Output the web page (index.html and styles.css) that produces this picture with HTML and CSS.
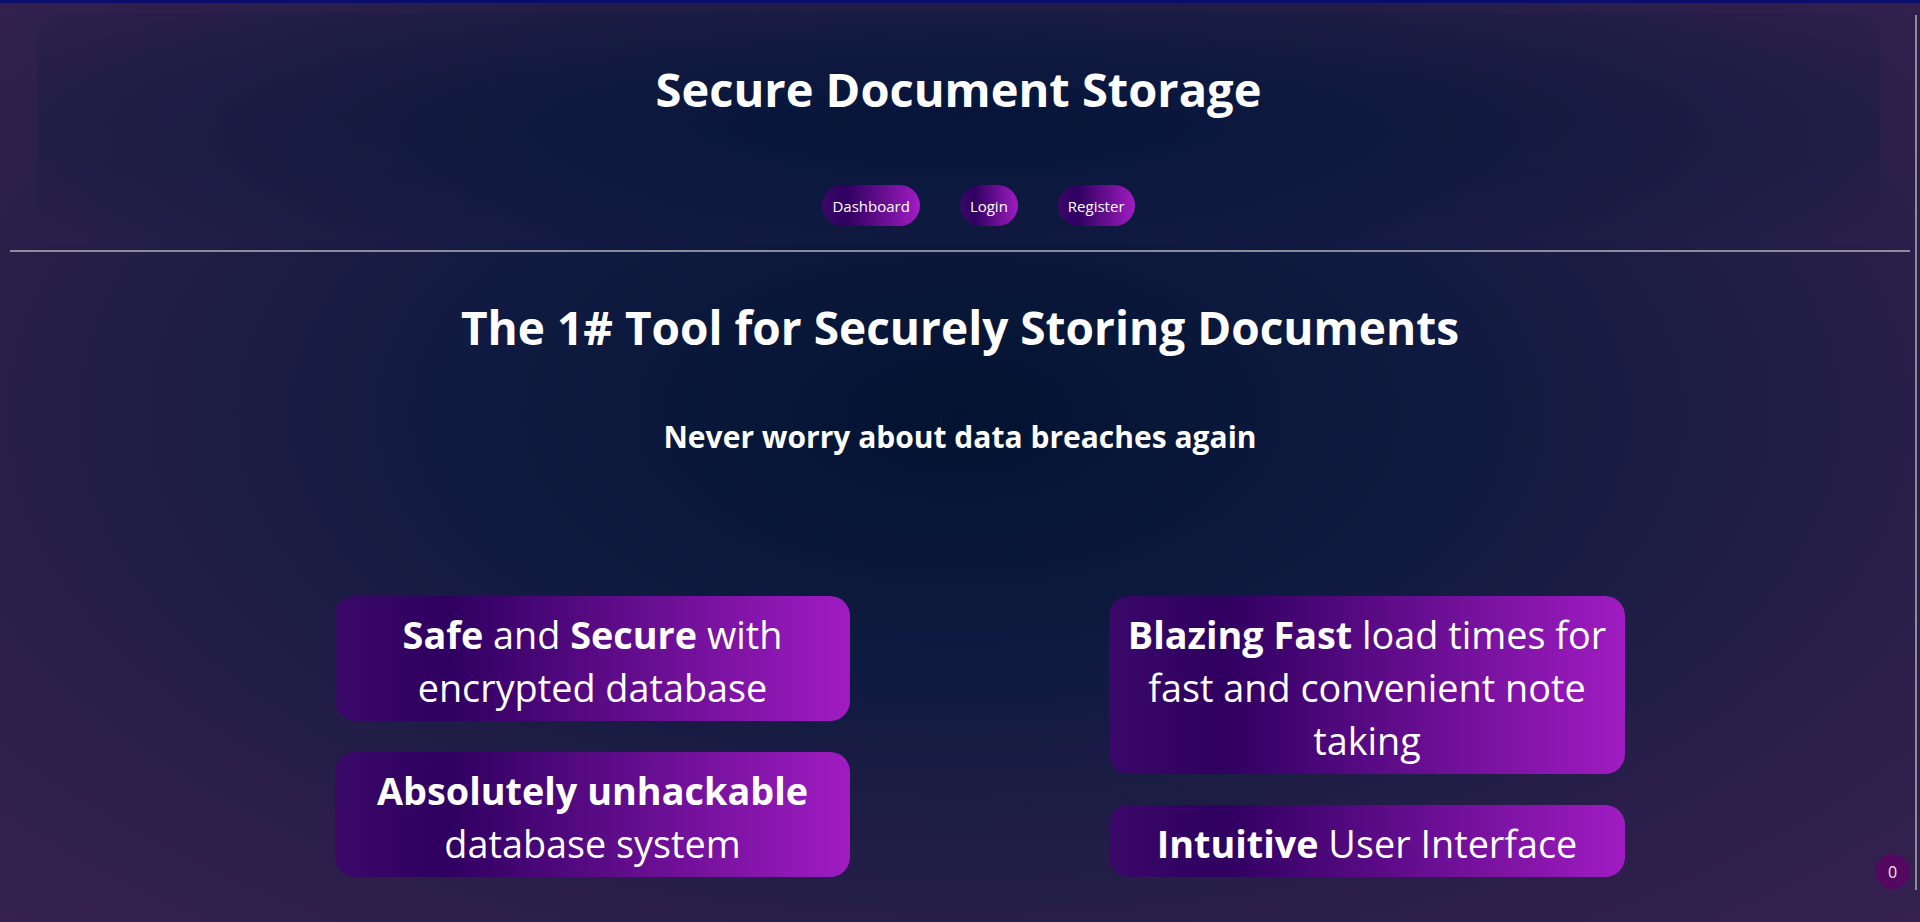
FILE: index.html
```html
<!DOCTYPE html>
<html lang="en">
<head>
<meta charset="utf-8">
<title>Secure Document Storage</title>
<link rel="stylesheet" href="styles.css">
</head>
<body>
<div class="topbar"></div>
<header class="head">
  <h1 class="title">Secure Document Storage</h1>
  <nav class="nav">
    <a class="pill" href="#">Dashboard</a>
    <a class="pill" href="#">Login</a>
    <a class="pill" href="#">Register</a>
  </nav>
</header>
<hr class="divider">
<main class="main">
  <h2 class="tagline">The 1# Tool for Securely Storing Documents</h2>
  <p class="sub">Never worry about data breaches again</p>
  <section class="features">
    <div class="col">
      <div class="card"><b>Safe</b> and <b>Secure</b> with encrypted database</div>
      <div class="card"><b>Absolutely unhackable</b> database system</div>
    </div>
    <div class="col">
      <div class="card"><b>Blazing Fast</b> load times for fast and convenient note taking</div>
      <div class="card"><b>Intuitive</b> User Interface</div>
    </div>
  </section>
</main>
<div class="badge">0</div>
<div class="rail"></div>
</body>
</html>
```

FILE: styles.css
```css
html, body {
  margin: 0;
  padding: 0;
}
body {
  min-height: 922px;
  font-family: "Open Sans", "Noto Sans", sans-serif;
  color: #ffffff;
  background: radial-gradient(ellipse at 50% 45%, #031331 0%, #0f1a40 35%, #2a1f4a 75%, #36214f 100%);
  overflow: hidden;
}
.topbar {
  height: 3px;
  background: #0a0d6b;
}
.head {
  margin: 10px 40px 0 37px;
  height: 232px;
  border-radius: 24px;
  background: radial-gradient(ellipse at 50% 45%, rgba(4, 20, 56, 0.85) 0%, rgba(12, 24, 62, 0.55) 45%, rgba(48, 32, 80, 0.25) 100%);
  display: flex;
  flex-direction: column;
  align-items: center;
}
.title {
  margin: 44px 0 0;
  font-size: 47px;
  line-height: 64px;
  font-weight: 700;
}
.nav {
  margin-top: 64px;
  padding-left: 40px;
  display: flex;
  gap: 40px;
}
.pill {
  height: 41px;
  padding: 0 10px;
  display: flex;
  align-items: center;
  border-radius: 21px;
  color: #fff;
  text-decoration: none;
  font-size: 15px;
  background: linear-gradient(90deg, #3a0868 0%, #2f0060 25%, #a01cc2 100%);
}
.divider {
  margin: 5px 10px 0;
  border: 0;
  height: 2px;
  background: #8d8b98;
}
.main {
  display: flex;
  flex-direction: column;
  align-items: center;
}
.tagline {
  margin: 48px 0 0;
  font-size: 46px;
  line-height: 54px;
  font-weight: 700;
}
.sub {
  margin: 63px 0 0;
  font-size: 30px;
  line-height: 40px;
  font-weight: 700;
}
.features {
  margin-top: 139px;
  align-self: stretch;
  padding-left: 40px;
  display: grid;
  grid-template-columns: 515px 516px;
  column-gap: 259px;
  justify-content: center;
  align-items: start;
}
.col {
  display: flex;
  flex-direction: column;
  gap: 31px;
}
.card {
  padding: 12px 16px 7px;
  border-radius: 20px;
  text-align: center;
  font-size: 37.8px;
  line-height: 53px;
  background: linear-gradient(90deg, #3a0868 0%, #2f0060 22%, #a01cc2 100%);
}
.card b {
  font-weight: 700;
}
.badge {
  position: fixed;
  left: 1875px;
  top: 854px;
  width: 35px;
  height: 35px;
  border-radius: 50%;
  background: #55085f;
  color: #f0e6f2;
  font-size: 16px;
  display: flex;
  align-items: center;
  justify-content: center;
}
.rail {
  position: fixed;
  left: 1915px;
  top: 15px;
  width: 2px;
  height: 875px;
  background: #8d8b98;
}
```
